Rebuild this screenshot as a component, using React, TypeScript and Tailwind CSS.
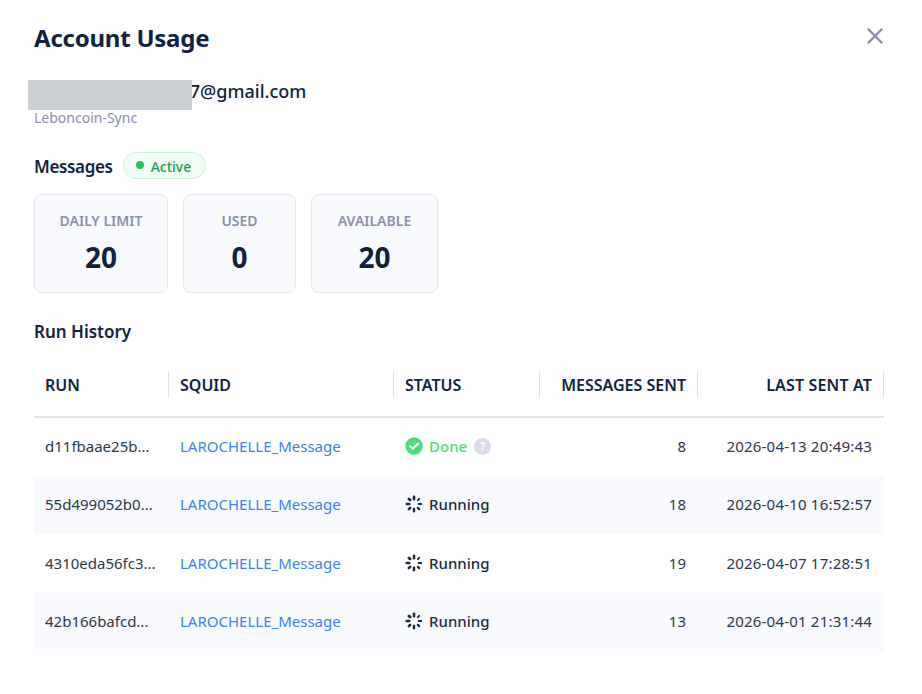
const rows = [
  { run: "d11fbaae25b...", status: "done", sent: 8, at: "2026-04-13 20:49:43" },
  { run: "55d499052b0...", status: "running", sent: 18, at: "2026-04-10 16:52:57" },
  { run: "4310eda56fc3...", status: "running", sent: 19, at: "2026-04-07 17:28:51" },
  { run: "42b166bafcd...", status: "running", sent: 13, at: "2026-04-01 21:31:44" },
];

function Spinner() {
  return (
    <svg width="18" height="18" viewBox="0 0 18 18" fill="none" stroke="#1b2a3d" strokeLinecap="round">
      <path d="M9 1.8V4.2" strokeWidth="2.6" />
      <path d="M14.1 3.9L12.9 5.1" strokeWidth="2" />
      <path d="M16.2 9H13.8" strokeWidth="2.2" />
      <path d="M14.1 14.1L12.9 12.9" strokeWidth="2.2" />
      <path d="M9 16.2V13.8" strokeWidth="2.4" />
      <path d="M3.9 14.1L5.1 12.9" strokeWidth="2.6" />
      <path d="M1.8 9H4.2" strokeWidth="2.6" />
      <path d="M3.9 3.9L5.1 5.1" strokeWidth="2.8" />
    </svg>
  );
}

function Check() {
  return (
    <svg width="18" height="18" viewBox="0 0 18 18">
      <circle cx="9" cy="9" r="8.7" fill="#4ade80" />
      <path d="M5 9.3L7.8 11.8L13 6.6" fill="none" stroke="#fff" strokeWidth="2.2" strokeLinecap="round" strokeLinejoin="round" />
    </svg>
  );
}

function Stat({ label, value, w }: { label: string; value: number; w: string }) {
  return (
    <div className={`${w} h-[99px] rounded-lg border border-[#e4e7f0] bg-[#f8fafe] flex flex-col items-center pt-[16px]`}>
      <div className="text-sm leading-[20px] font-semibold text-[#8a8fa8]">{label}</div>
      <div className="mt-[7px] text-[28px] leading-[38px] font-bold text-[#10233d]">{value}</div>
    </div>
  );
}

function Th({ children, w, right, wide }: { children: string; w: string; right?: boolean; wide?: boolean }) {
  return (
    <th className={`${w} p-0 pb-[5px] h-[58px] font-semibold text-base text-[#10233d] relative ${right ? "text-right pr-[12px]" : "text-left pl-[11px]"} ${wide ? "tracking-[0.15px]" : ""}`}>
      {children}
      <span className="absolute right-0 top-[12px] h-[27px] w-px bg-[#e2e3e6]" />
    </th>
  );
}

export default function App() {
  return (
    <div className="w-[922px] h-[694px] bg-white relative overflow-hidden px-[34px] pt-[22px] font-['Noto_Sans',sans-serif]">
      <button className="absolute right-[38px] top-[27px] text-[#8a8fa8]">
        <svg width="18" height="18" viewBox="0 0 18 18" fill="none" stroke="currentColor" strokeWidth="2.4" strokeLinecap="round">
          <path d="M2.5 2.5L15.5 15.5M15.5 2.5L2.5 15.5" />
        </svg>
      </button>
      <h1 className="text-2xl leading-[32px] font-bold tracking-[-0.23px] text-[#10233d]">Account Usage</h1>
      <div className="mt-[23px] text-lg leading-[28px] font-medium text-[#10233d]">abcdefghijklmnop7@gmail.com</div>
      <div className="absolute left-[28px] top-[80px] w-[164px] h-[30px] bg-[#cdd0d2]" />
      <div className="text-sm leading-[20px] text-[#8a8fa8] mt-[3px]">Leboncoin-Sync</div>
      <div className="mt-[25px] h-7 flex items-center gap-[10px]">
        <span className="text-[17px] leading-[28px] font-semibold tracking-[-0.35px] text-[#10233d]">Messages</span>
        <span className="h-[27px] w-[83px] mb-[3px] pt-[2px] rounded-full border border-[#c6f3d6] bg-[#f0fdf4] flex items-center pl-[12px] gap-[7px] text-sm font-medium text-[#22a04f]">
          <span className="size-2 -mt-[3px] rounded-full bg-[#22c55e]" />
          Active
        </span>
      </div>
      <div className="mt-[13px] flex gap-[15px]">
        <Stat label="DAILY LIMIT" value={20} w="w-[134px]" />
        <Stat label="USED" value={0} w="w-[113px]" />
        <Stat label="AVAILABLE" value={20} w="w-[127px]" />
      </div>
      <div className="mt-[27px] text-[17px] leading-[24px] font-semibold text-[#10233d]">Run History</div>
      <table className="mt-[15px] w-[850px] table-fixed border-collapse">
        <thead>
          <tr className="border-b-2 border-[#e2e3e6]">
            <Th w="w-[135px]">RUN</Th>
            <Th w="w-[225px]">SQUID</Th>
            <Th w="w-[146px]">STATUS</Th>
            <Th w="w-[158px]" right>MESSAGES SENT</Th>
            <Th w="w-[186px]" right wide>LAST SENT AT</Th>
          </tr>
        </thead>
        <tbody className="text-[15px] text-[#2d3748]">
          {rows.map((r, i) => (
            <tr key={r.run} className={`h-[58.5px] ${i % 2 ? "bg-[#f8fafe]" : ""}`}>
              <td className="p-0 pb-[1px] pl-[11px]">{r.run}</td>
              <td className="p-0 pb-[1px] pl-[11px] text-[#3b82f6]">LAROCHELLE_Message</td>
              <td className="p-0 pb-[1px] pl-[11px]">
                {r.status === "done" ? (
                  <span className="flex items-center gap-[6px] font-medium text-[#4ade80]">
                    <Check />
                    Done
                    <span className="ml-[1px] size-[17px] rounded-full bg-[#d9dbe9] text-white text-[11px] font-bold flex items-center justify-center">?</span>
                  </span>
                ) : (
                  <span className="flex items-center gap-[6px] font-medium text-[#1b2a3d]">
                    <Spinner />
                    Running
                  </span>
                )}
              </td>
              <td className="p-0 pb-[1px] pr-[12px] text-right">{r.sent}</td>
              <td className="p-0 pb-[1px] pr-[12px] text-right tracking-[0.2px]">{r.at}</td>
            </tr>
          ))}
        </tbody>
      </table>
    </div>
  );
}
